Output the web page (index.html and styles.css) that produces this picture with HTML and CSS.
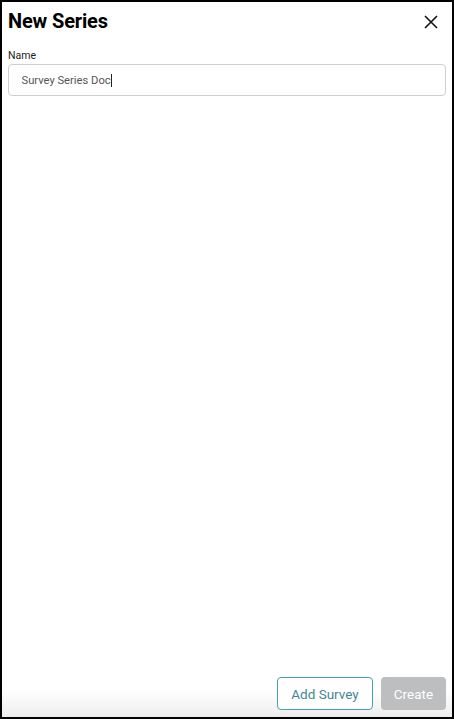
FILE: index.html
```html
<!DOCTYPE html>
<html lang="en">
<head>
<meta charset="utf-8">
<title>New Series</title>
<link rel="stylesheet" href="styles.css">
</head>
<body>
<div class="dialog">
  <header class="dialog-header">
    <h1 class="dialog-title">New Series</h1>
    <button class="close-btn" aria-label="Close">
      <svg width="14" height="14" viewBox="0 0 14 14"><path d="M1 1L13 13M13 1L1 13" stroke="#111" stroke-width="1.6" fill="none"/></svg>
    </button>
  </header>
  <div class="dialog-body">
    <label class="field-label" for="name">Name</label>
    <div class="input-box"><span class="input-text">Survey Series Doc</span><span class="caret"></span></div>
  </div>
  <footer class="dialog-footer">
    <button class="btn btn-outline">Add Survey</button>
    <button class="btn btn-disabled">Create</button>
  </footer>
</div>
</body>
</html>
```
FILE: styles.css
```css
html, body {
  margin: 0;
  padding: 0;
  background: #fff;
}
body {
  font-family: Roboto, "Liberation Sans", Arial, sans-serif;
}
.dialog {
  box-sizing: border-box;
  width: 454px;
  height: 719px;
  border: 2px solid #000;
  display: flex;
  flex-direction: column;
  background: #fff;
}
.dialog-header {
  display: flex;
  align-items: center;
  justify-content: space-between;
  padding: 7px 14px 0 6px;
}
.dialog-title {
  margin: 0;
  font-size: 20px;
  line-height: 24px;
  font-weight: 700;
  color: #000;
  letter-spacing: -0.15px;
}
.close-btn {
  border: 0;
  background: none;
  padding: 0;
  width: 14px;
  height: 14px;
  display: flex;
  margin-top: 2px;
}
.dialog-body {
  flex: 1;
  padding: 17px 6px 0 6px;
  display: flex;
  flex-direction: column;
}
.field-label {
  font-size: 10.5px;
  line-height: 12px;
  color: #222;
  margin-bottom: 2px;
}
.input-box {
  box-sizing: border-box;
  height: 32px;
  border: 1.5px solid #cfcfcf;
  border-radius: 4px;
  display: flex;
  align-items: center;
  padding-left: 12.5px;
  font-size: 11.2px;
  color: #555;
}
.caret {
  display: inline-block;
  width: 1px;
  height: 13px;
  background: #222;
  margin-left: 0;
}
.dialog-footer {
  display: flex;
  justify-content: flex-end;
  gap: 8px;
  padding: 0 6px 7px 6px;
  background: linear-gradient(to bottom, rgba(255,255,255,0) 0%, rgba(255,255,255,0) 35%, rgba(0,0,0,0.07) 100%);
}
.btn {
  box-sizing: border-box;
  height: 33px;
  border-radius: 4px;
  font-family: Roboto, "Liberation Sans", Arial, sans-serif;
  font-size: 13.5px;
  padding: 0;
}
.btn-outline {
  width: 96px;
  background: #fff;
  border: 1.5px solid #4a9fa9;
  color: #3f8892;
}
.btn-disabled {
  width: 65px;
  background: #bcbebf;
  border: 0;
  color: #fff;
}
```
